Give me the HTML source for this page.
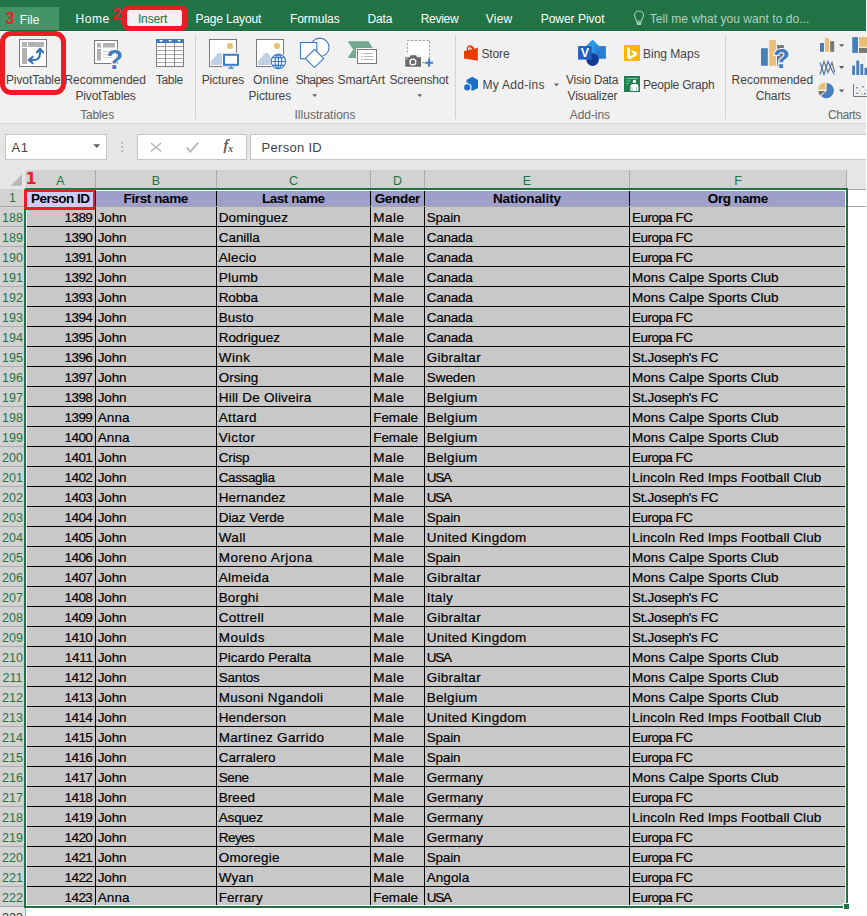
<!DOCTYPE html>
<html lang="en"><head><meta charset="utf-8"><title>Excel - Insert PivotTable</title>
<style>
html,body{margin:0;padding:0}
body{width:867px;height:916px;position:relative;overflow:hidden;background:#e6e6e6;font-family:'Liberation Sans',sans-serif}
div,span,svg{position:absolute;box-sizing:border-box}
.t{white-space:pre;line-height:20px;height:20px;font-size:12px;color:#444}
.c{font-size:13.5px;color:#000;-webkit-text-stroke:0.18px #000}
.b{font-weight:700;-webkit-text-stroke:0}
.r{font-size:12.5px;color:#217346}
#green{left:0;top:0;width:867px;height:31px;background:#217346;border-bottom:1px solid #1e6b40}
#file{left:0;top:7px;width:59px;height:23px;background:#439467}
#ribbon{left:0;top:31px;width:867px;height:93px;background:#f1f1f1;border-bottom:1px solid #d4d4d4;border-top:1px solid #f9f9f9}
.sep{width:1px;background:#d2d2d2;top:35px;height:84px}
.box{background:#fff;border:1px solid #c6c6c6;top:134px;height:26px}
.red{border:4.5px solid #ed1c24}
#colhdr{left:25px;top:170px;width:822px;height:18px;background:#d2d2d2;border-left:1px solid #dcdcdc}
#rowhdr{left:0;top:189px;width:24px;height:717px;background:#d2d2d2}
#cells{left:27px;top:191px;width:818px;height:714px;background:#c8c8c8}
#hrow{left:27px;top:191px;width:818px;height:15px;background:#9f9fcb}
#frz{left:0;top:206px;width:866px;height:1px;background:#a6a6a6}
#white{left:848px;top:190px;width:19px;height:726px;background:#fff}
#white2{left:26px;top:908px;width:842px;height:8px;background:#fff}
.hl{left:27px;width:818px;height:1px;background:#000}
.rl{left:0;width:24px;height:1px;background:#ababab}
.vl{width:1px;background:#000}
.cs{top:170px;width:1px;height:18px;background:#ababab}
.g{background:#217346}

</style></head>
<body>
<div id="green"></div><div id="file"></div>
<div id="ribbon"></div>
<div class="sep" style="left:195px"></div><div class="sep" style="left:455px"></div><div class="sep" style="left:725px"></div>
<div class="red" style="left:122px;top:5.2px;width:65.5px;height:25.6px;border-radius:8px;border-width:5.3px 6.5px 5.5px 5.5px;background:#f1f1f1"></div>
<div class="red" style="left:-0.5px;top:31px;width:66.5px;height:64px;border-radius:11px;border-width:5px"></div>
<div class="box" style="left:5px;width:102px"></div>
<div class="box" style="left:137px;width:110px"></div>
<div class="box" style="left:250px;width:630px"></div>
<div id="colhdr"></div>
<div id="rowhdr"></div>
<div id="white"></div><div id="white2"></div>
<div style="left:848px;top:189px;width:19px;height:1px;background:#a6a6a6"></div>
<div style="left:26px;top:190px;width:820px;height:716px;background:#fff"></div>
<div id="cells"></div>
<div id="hrow"></div>
<div id="frz"></div>
<div style="left:0;top:906px;width:24px;height:1px;background:#ababab"></div>
<div style="left:0;top:907px;width:26px;height:9px;background:#e8e8e8;border-right:1px solid #a6a6a6"></div>
<div style="left:24px;top:189px;width:72px;height:21px;border:3px solid #ed1c24;background:#ccf"></div>
<div class="g" style="left:25px;top:188px;width:823px;height:2px"></div>
<div style="left:24px;top:189px;width:72px;height:21px;border:3px solid #ed1c24;background:#ccf"></div>
<div class="g" style="left:24px;top:210px;width:2px;height:698px"></div>
<div class="g" style="left:24px;top:906px;width:819px;height:2px"></div>
<div class="g" style="left:846px;top:188px;width:2px;height:715px"></div>
<div class="g" style="left:843px;top:903px;width:6px;height:6px;border:1px solid #fff;border-right:0;border-bottom:0"></div>
<div style="left:866px;top:0;width:1px;height:916px;background:#fff"></div>

<div class="hl" style="top:226px"></div>
<div class="rl" style="top:226px"></div>
<div class="hl" style="top:246px"></div>
<div class="rl" style="top:246px"></div>
<div class="hl" style="top:266px"></div>
<div class="rl" style="top:266px"></div>
<div class="hl" style="top:286px"></div>
<div class="rl" style="top:286px"></div>
<div class="hl" style="top:306px"></div>
<div class="rl" style="top:306px"></div>
<div class="hl" style="top:326px"></div>
<div class="rl" style="top:326px"></div>
<div class="hl" style="top:346px"></div>
<div class="rl" style="top:346px"></div>
<div class="hl" style="top:366px"></div>
<div class="rl" style="top:366px"></div>
<div class="hl" style="top:386px"></div>
<div class="rl" style="top:386px"></div>
<div class="hl" style="top:406px"></div>
<div class="rl" style="top:406px"></div>
<div class="hl" style="top:426px"></div>
<div class="rl" style="top:426px"></div>
<div class="hl" style="top:446px"></div>
<div class="rl" style="top:446px"></div>
<div class="hl" style="top:466px"></div>
<div class="rl" style="top:466px"></div>
<div class="hl" style="top:486px"></div>
<div class="rl" style="top:486px"></div>
<div class="hl" style="top:506px"></div>
<div class="rl" style="top:506px"></div>
<div class="hl" style="top:526px"></div>
<div class="rl" style="top:526px"></div>
<div class="hl" style="top:546px"></div>
<div class="rl" style="top:546px"></div>
<div class="hl" style="top:566px"></div>
<div class="rl" style="top:566px"></div>
<div class="hl" style="top:586px"></div>
<div class="rl" style="top:586px"></div>
<div class="hl" style="top:606px"></div>
<div class="rl" style="top:606px"></div>
<div class="hl" style="top:626px"></div>
<div class="rl" style="top:626px"></div>
<div class="hl" style="top:646px"></div>
<div class="rl" style="top:646px"></div>
<div class="hl" style="top:666px"></div>
<div class="rl" style="top:666px"></div>
<div class="hl" style="top:686px"></div>
<div class="rl" style="top:686px"></div>
<div class="hl" style="top:706px"></div>
<div class="rl" style="top:706px"></div>
<div class="hl" style="top:726px"></div>
<div class="rl" style="top:726px"></div>
<div class="hl" style="top:746px"></div>
<div class="rl" style="top:746px"></div>
<div class="hl" style="top:766px"></div>
<div class="rl" style="top:766px"></div>
<div class="hl" style="top:786px"></div>
<div class="rl" style="top:786px"></div>
<div class="hl" style="top:806px"></div>
<div class="rl" style="top:806px"></div>
<div class="hl" style="top:826px"></div>
<div class="rl" style="top:826px"></div>
<div class="hl" style="top:846px"></div>
<div class="rl" style="top:846px"></div>
<div class="hl" style="top:866px"></div>
<div class="rl" style="top:866px"></div>
<div class="hl" style="top:886px"></div>
<div class="rl" style="top:886px"></div>
<div class="vl" style="left:95px;top:191px;height:15px"></div>
<div class="vl" style="left:95px;top:207px;height:698px"></div>
<div class="vl" style="left:216px;top:191px;height:15px"></div>
<div class="vl" style="left:216px;top:207px;height:698px"></div>
<div class="vl" style="left:370px;top:191px;height:15px"></div>
<div class="vl" style="left:370px;top:207px;height:698px"></div>
<div class="vl" style="left:424px;top:191px;height:15px"></div>
<div class="vl" style="left:424px;top:207px;height:698px"></div>
<div class="vl" style="left:629px;top:191px;height:15px"></div>
<div class="vl" style="left:629px;top:207px;height:698px"></div>
<div class="cs" style="left:95px"></div>
<div class="cs" style="left:216px"></div>
<div class="cs" style="left:370px"></div>
<div class="cs" style="left:424px"></div>
<div class="cs" style="left:629px"></div>
<div class="cs" style="left:846px"></div>
<svg width="867" height="190" viewBox="0 0 867 190" style="left:0;top:0" font-family="'Liberation Sans',sans-serif">
<!-- lightbulb -->
<g fill="none" stroke="#a8cdb9" stroke-width="1.1">
<path d="M636.6 21.3 C636.6 19.3 634.5 18 634.5 15.5 A4.5 4.5 0 0 1 643.5 15.5 C643.5 18 641.4 19.3 641.4 21.3 Z"/>
<path d="M636.3 22.9 H641.7 M637 24.3 H641" stroke-width="1.4"/>
</g>
<!-- PivotTable -->
<rect x="19.5" y="39.5" width="27" height="27" fill="#fff" stroke="#797979"/>
<rect x="22" y="42" width="5" height="5" fill="#b2b2b2"/><rect x="28" y="42" width="16" height="5" fill="#b2b2b2"/><rect x="22" y="48" width="5" height="16" fill="#b2b2b2"/>
<g fill="none" stroke="#3472b5" stroke-width="2"><path d="M29 60 H33.5 C38 60 40 57.5 40 53 V49.5"/><path d="M33.3 56.2 L28.8 60 L33.3 63.8"/><path d="M36.3 53 L40 48.8 L43.7 53"/></g>
<!-- Recommended PivotTables -->
<rect x="94.5" y="40.5" width="23" height="23" fill="#fff" stroke="#797979"/>
<rect x="97" y="43" width="4" height="4.5" fill="#b2b2b2"/><rect x="103" y="43" width="12" height="4.5" fill="#b2b2b2"/><rect x="97" y="49" width="4" height="11.5" fill="#b2b2b2"/>
<path d="M103 51.5 H112 M103 54.5 H112 M103 57.5 H112" stroke="#d4d4d4" stroke-width="1.2"/>
<text x="106.6" y="68.6" font-size="27" font-weight="700" fill="#3e7bc4" stroke="#f4f4f4" stroke-width="2.2" paint-order="stroke">?</text>
<!-- Table -->
<rect x="156.5" y="39.5" width="27" height="27" fill="#fff" stroke="#808080"/>
<rect x="156" y="39" width="28" height="4" fill="#3e7bc4"/>
<path d="M159.2 40 h3.8 l-1.9 2.3z M168.2 40 h3.8 l-1.9 2.3z M177.2 40 h3.8 l-1.9 2.3z" fill="#fff"/>
<path d="M157 46.5 H183 M157 50.5 H183 M157 54.5 H183 M157 58.5 H183 M157 62.5 H183" stroke="#a6a6a6" stroke-width="1"/>
<path d="M165.5 43 V66 M174.5 43 V66" stroke="#909090" stroke-width="1"/>
<!-- Pictures -->
<rect x="209.5" y="39.5" width="27" height="27" fill="#fff" stroke="#797979"/>
<circle cx="230" cy="46" r="3" fill="#eabf6e"/>
<path d="M211 65 V61.3 L218.3 53 H220.6 L224 57 V65Z" fill="#bdd0e6"/>
<rect x="222" y="52.8" width="18" height="14" fill="#f6f6f6"/>
<rect x="224" y="54.8" width="14" height="10" fill="#fff" stroke="#3e7bc4" stroke-width="2"/>
<path d="M231 66 V68 M228.3 68.2 H233.7" stroke="#3e7bc4" stroke-width="1.3"/>
<!-- Online Pictures -->
<rect x="256.5" y="39.5" width="27" height="27" fill="#fff" stroke="#797979"/>
<circle cx="277" cy="46" r="3" fill="#eabf6e"/>
<path d="M258 65 V61.3 L265.3 53 H267.6 L271 57 V65Z" fill="#bdd0e6"/>
<circle cx="278.4" cy="61.5" r="8.6" fill="#f6f6f6"/>
<g fill="none" stroke="#3e7bc4" stroke-width="1.2"><circle cx="278.4" cy="61.5" r="7.2" fill="#fff"/><ellipse cx="278.4" cy="61.5" rx="3.3" ry="7.2"/><path d="M278.4 54.3 V68.7 M271.2 61.5 H285.6 M272.4 57.7 H284.4 M272.4 65.3 H284.4"/></g>
<!-- Shapes -->
<g fill="#fff" stroke="#3e7bc4" stroke-width="1.1"><circle cx="319.8" cy="47.3" r="9.2"/><rect x="300.5" y="42.5" width="16.3" height="16.2"/><path d="M314.5 49.3 L323.7 58.5 L314.5 67.6 L305.3 58.5Z"/></g>
<!-- SmartArt -->
<path d="M347.7 41.2 H368.4 L373.6 49.5 L368.4 57.9 H347.7 L353.2 49.5Z" fill="#74a892"/>
<rect x="356" y="48" width="21.7" height="16.8" fill="#f6f6f6"/>
<rect x="357.5" y="49.5" width="19" height="14" fill="#fff" stroke="#797979"/>
<path d="M361 53.5 h1.6 M364 53.5 H373 M361 56.5 h1.6 M364 56.5 H373 M361 59.5 h1.6 M364 59.5 H373" stroke="#b4b4b4" stroke-width="1"/>
<!-- Screenshot -->
<rect x="407.5" y="40.5" width="22" height="22" fill="#fff" stroke="#a0a0a0" stroke-dasharray="2.2 1.6"/>
<rect x="404.2" y="54.2" width="17.8" height="13.6" fill="#f6f6f6"/>
<path d="M405.2 57.2 H409.6 L410.6 55.2 H416 L417 57.2 H421 V66.8 H405.2Z" fill="#6a6a6a"/>
<circle cx="412.9" cy="62" r="2.9" fill="#6a6a6a" stroke="#fff" stroke-width="1.4"/>
<rect x="406.3" y="58.2" width="1.4" height="1.2" fill="#ddd"/>
<path d="M423 62.8 H425" stroke="#a0a0a0"/>
<path d="M425.2 62.8 H433 M429.1 58.8 V66.8" stroke="#3e7bc4" stroke-width="2"/>
<!-- dropdown arrows -->
<path d="M312.2 94.2 h5 l-2.5 2.8z M417.2 94.2 h5 l-2.5 2.8z M554 83.4 h5 l-2.5 2.8z" fill="#606060"/>
<!-- Store -->
<path d="M467.4 51 V48.6 A2.6 2.7 0 0 1 472.6 48.4 V49.6 M470 48.6 A1.6 1.6 0 0 1 473.4 48.4 V49.2" fill="none" stroke="#eb3c00" stroke-width="1.3"/>
<path d="M464 51.3 L477.8 47.8 V60.8 L464 58.5Z" fill="#eb3c00"/>
<!-- My Add-ins -->
<path d="M472.3 76.8 L478 79.9 V88.2 L472.3 90.8 L466.5 88.2 V79.9Z" fill="#1b6ec8"/>
<path d="M467.2 83.3 L470.8 85.3 V89.4 L467.2 91.4 L463.6 89.4 V85.3Z" fill="#1b6ec8" stroke="#f1f1f1" stroke-width="1.2"/>
<!-- Visio -->
<path d="M592.6 39.6 L600.6 47.6 L592.6 55.6 L584.6 47.6Z" fill="#2f96e6"/>
<rect x="594.6" y="46.1" width="11.3" height="12.7" fill="#2b7cd3"/>
<path d="M594.6 46.1 L599.1 46.1 L600.6 47.6 L594.6 53.6Z" fill="#2a86dc"/>
<circle cx="592.6" cy="59.6" r="6.3" fill="#123c94"/>
<rect x="578.1" y="46.1" width="13.6" height="13.5" fill="#1f5fc4"/>
<text x="580.7" y="57.1" font-size="12.5" font-weight="700" fill="#fff">V</text>
<!-- Bing -->
<rect x="624" y="45" width="16" height="16" fill="#ffb400"/>
<path d="M627.2 46.8 L629.8 47.7 V56.2 L634 53.9 L632.3 53.1 L631.2 50.3 L636.8 52.3 V55.2 L629.8 59.4 L627.2 57.9Z" fill="#fff"/>
<!-- People Graph -->
<rect x="624" y="76" width="16" height="16" fill="#1e7e4e"/>
<path d="M626 78.5 H638 M626 81 H630.5 M626 83.5 H629" stroke="#7cc29c" stroke-width="1.2"/>
<circle cx="634.4" cy="81.4" r="1.7" fill="#fff"/>
<path d="M630.4 91 V86.5 C630.4 84.7 631.4 84 632.6 84 H636.2 C637.4 84 638.4 84.7 638.4 86.5 V91 H637 V87 H636.6 V91 H632.2 V87 H631.8 V91Z" fill="#fff"/>
<!-- Recommended Charts -->
<rect x="761" y="48.2" width="6.8" height="17.5" fill="#4a7ebb"/><rect x="769.2" y="40.1" width="6.8" height="25.6" fill="#eabf74"/><rect x="777" y="45.1" width="6.8" height="20.6" fill="#767676"/>
<text x="773.2" y="68.4" font-size="27" font-weight="700" fill="#3e7bc4" stroke="#f4f4f4" stroke-width="2.2" paint-order="stroke">?</text>
<!-- small charts -->
<rect x="820" y="43" width="4" height="8.8" fill="#4a7ebb"/><rect x="825" y="38" width="4" height="13.8" fill="#eabf74"/><rect x="830.2" y="41.2" width="4" height="10.6" fill="#767676"/>
<path d="M839 44.2 h5.2 l-2.6 2.9z M839 66 h5.2 l-2.6 2.9z M839 89.6 h5.2 l-2.6 2.9z" fill="#606060"/>
<rect x="852.2" y="37.1" width="5.8" height="15.8" fill="#4a7ebb"/><rect x="859" y="37.1" width="8" height="9.7" fill="#eabf74"/><rect x="859" y="47.9" width="8" height="5" fill="#767676"/>
<g fill="none" stroke-width="1.2"><path d="M820 74.5 L824 61.5 L828 72.5 L832 62.5 L834.6 72" stroke="#777"/><path d="M820 62.5 L824 74.5 L828 61.5 L832 70.5 L834.6 74.5" stroke="#3e7bc4"/></g>
<rect x="852.2" y="65.7" width="2.8" height="9.3" fill="#4a7ebb"/><rect x="856.3" y="60.6" width="2.9" height="14.4" fill="#4a7ebb"/><rect x="860.4" y="64.1" width="2.8" height="10.9" fill="#4a7ebb"/><rect x="864.5" y="67.8" width="2.5" height="7.2" fill="#4a7ebb"/>
<path d="M826.6 90.8 V83 A7.6 7.6 0 1 1 821 96.1Z" fill="#4a7ebb"/>
<path d="M825.4 89.6 H818.2 A7.2 7.2 0 0 1 825.4 82.4Z" fill="#eabf74"/>
<path d="M825.2 91 L820 95.4 A7.2 7.2 0 0 1 818.3 91Z" fill="#767676"/>
<path d="M853.5 84 V96.5 H867" fill="none" stroke="#777" stroke-width="1"/>
<path d="M856 87 h1.6 v1.6 h-1.6z M862 86 h1.6 v1.6 h-1.6z M856.5 92.5 h1.6 v1.6 h-1.6z M864 93 h1.6 v1.6 h-1.6z" fill="#4a7ebb"/>
<path d="M859 89.5 h1.6 v1.6 h-1.6z M865 89.5 h1.6 v1.6 h-1.6z M861 93.5 h1.6 v1.6 h-1.6z" fill="#eabf74"/>
<!-- formula bar -->
<path d="M93.2 144.3 h7 l-3.5 3.8z" fill="#606060"/>
<path d="M122.2 142.2 v1.6 M122.2 146.3 v1.6 M122.2 150.4 v1.6" stroke="#a0a0a0" stroke-width="1.5"/>
<path d="M151 143 L161.1 151.5 M161.1 143 L151 151.5" stroke="#b4b4b4" stroke-width="1.5" fill="none"/>
<path d="M186.7 147.7 L190.4 151.4 L198.2 142.8" stroke="#bcbcbc" stroke-width="2.1" fill="none"/>
<text x="223.4" y="149.6" font-family="'Liberation Serif',serif" font-style="italic" font-size="15.5" fill="#4a4a4a" stroke="#4a4a4a" stroke-width="0.35">f</text>
<text x="228.3" y="152.2" font-family="'Liberation Serif',serif" font-style="italic" font-weight="700" font-size="9.5" fill="#555">x</text>
<!-- corner triangle -->
<path d="M22 174.3 V185.7 H10.6Z" fill="#b8b8b8"/>
</svg>

<span class="t" style="left:5.60px;top:8.86px;font-size:16px;color:#ed1c24;font-weight:700;">3</span>
<span class="t" style="left:19.70px;top:9.84px;color:#fff;letter-spacing:0.114px;">File</span>
<span class="t" style="left:75.50px;top:8.84px;color:#fff;letter-spacing:0.571px;">Home</span>
<span class="t" style="left:112.20px;top:3.88px;font-size:16.5px;color:#ed1c24;font-weight:700;">2</span>
<span class="t" style="left:137.90px;top:8.84px;color:#217346;letter-spacing:-0.119px;">Insert</span>
<span class="t" style="left:195.50px;top:8.84px;color:#fff;letter-spacing:-0.163px;">Page Layout</span>
<span class="t" style="left:289.90px;top:8.84px;color:#fff;letter-spacing:-0.027px;">Formulas</span>
<span class="t" style="left:367.50px;top:8.84px;color:#fff;letter-spacing:-0.14px;">Data</span>
<span class="t" style="left:420.70px;top:8.84px;color:#fff;letter-spacing:-0.277px;">Review</span>
<span class="t" style="left:485.70px;top:8.84px;color:#fff;letter-spacing:0.251px;">View</span>
<span class="t" style="left:540.70px;top:8.84px;color:#fff;letter-spacing:-0.021px;">Power Pivot</span>
<span class="t" style="left:649.70px;top:8.84px;color:#b2d0c0;letter-spacing:0.057px;">Tell me what you want to do...</span>
<span class="t" style="left:5.90px;top:69.54px;letter-spacing:-0.078px;">PivotTable</span>
<span class="t" style="left:64.40px;top:69.54px;letter-spacing:0.02px;">Recommended</span>
<span class="t" style="left:75.40px;top:86.14px;letter-spacing:-0.098px;">PivotTables</span>
<span class="t" style="left:155.70px;top:69.54px;letter-spacing:-0.277px;">Table</span>
<span class="t" style="left:80.20px;top:105.14px;color:#666;letter-spacing:-0.148px;">Tables</span>
<span class="t" style="left:201.70px;top:69.54px;letter-spacing:-0.12px;">Pictures</span>
<span class="t" style="left:253.10px;top:69.54px;letter-spacing:0.185px;">Online</span>
<span class="t" style="left:248.40px;top:86.14px;letter-spacing:-0.082px;">Pictures</span>
<span class="t" style="left:295.70px;top:69.54px;letter-spacing:-0.534px;">Shapes</span>
<span class="t" style="left:337.50px;top:69.54px;letter-spacing:0.045px;">SmartArt</span>
<span class="t" style="left:389.50px;top:69.54px;letter-spacing:-0.17px;">Screenshot</span>
<span class="t" style="left:294.50px;top:105.14px;color:#666;letter-spacing:0.031px;">Illustrations</span>
<span class="t" style="left:481.50px;top:43.94px;letter-spacing:-0.138px;">Store</span>
<span class="t" style="left:482.40px;top:75.24px;letter-spacing:0.294px;">My Add-ins</span>
<span class="t" style="left:566.00px;top:69.54px;letter-spacing:-0.238px;">Visio Data</span>
<span class="t" style="left:567.60px;top:86.14px;letter-spacing:-0.221px;">Visualizer</span>
<span class="t" style="left:643.00px;top:43.94px;">Bing Maps</span>
<span class="t" style="left:643.00px;top:75.24px;letter-spacing:-0.222px;">People Graph</span>
<span class="t" style="left:569.80px;top:105.14px;color:#666;letter-spacing:-0.07px;">Add-ins</span>
<span class="t" style="left:731.60px;top:69.54px;letter-spacing:0.02px;">Recommended</span>
<span class="t" style="left:755.70px;top:86.14px;letter-spacing:-0.091px;">Charts</span>
<span class="t" style="left:827.90px;top:105.14px;color:#666;letter-spacing:-0.407px;">Charts</span>
<span class="t" style="left:11.50px;top:138.10px;font-size:13px;letter-spacing:0.697px;">A1</span>
<span class="t" style="left:261.50px;top:138.10px;font-size:13px;letter-spacing:0.299px;">Person ID</span>
<span class="t r" style="left:56.33px;top:171.07px;">A</span>
<span class="t r" style="left:151.83px;top:171.07px;">B</span>
<span class="t r" style="left:288.98px;top:171.07px;">C</span>
<span class="t r" style="left:392.98px;top:171.07px;">D</span>
<span class="t r" style="left:522.83px;top:171.07px;">E</span>
<span class="t r" style="left:734.18px;top:171.07px;">F</span>
<span class="t" style="left:25.40px;top:169.46px;font-size:16px;color:#ed1c24;font-weight:700;font-family:'DejaVu Sans',sans-serif;">1</span>
<span class="t r" style="left:9.02px;top:188.17px;">1</span>
<span class="t c b" style="left:31.00px;top:188.82px;letter-spacing:-0.503px;">Person ID</span>
<span class="t c b" style="left:123.62px;top:188.82px;letter-spacing:-0.392px;">First name</span>
<span class="t c b" style="left:262.05px;top:188.82px;letter-spacing:-0.484px;">Last name</span>
<span class="t c b" style="left:374.64px;top:188.82px;letter-spacing:-0.311px;">Gender</span>
<span class="t c b" style="left:492.91px;top:188.82px;letter-spacing:-0.084px;">Nationality</span>
<span class="t c b" style="left:707.77px;top:188.82px;letter-spacing:-0.366px;">Org name</span>
<span class="t r" style="left:2.07px;top:208.27px;">188</span>
<span class="t c" style="left:64.46px;top:207.92px;letter-spacing:-0.537px;">1389</span>
<span class="t c" style="left:97.70px;top:207.92px;letter-spacing:-0.118px;">John</span>
<span class="t c" style="left:218.70px;top:207.92px;letter-spacing:0.13px;">Dominguez</span>
<span class="t c" style="left:373.20px;top:207.92px;letter-spacing:0.507px;">Male</span>
<span class="t c" style="left:426.70px;top:207.92px;letter-spacing:-0.17px;">Spain</span>
<span class="t c" style="left:632.10px;top:207.92px;letter-spacing:-0.553px;">Europa FC</span>
<span class="t r" style="left:2.07px;top:228.27px;">189</span>
<span class="t c" style="left:64.46px;top:227.92px;letter-spacing:-0.537px;">1390</span>
<span class="t c" style="left:97.70px;top:227.92px;letter-spacing:-0.118px;">John</span>
<span class="t c" style="left:218.70px;top:227.92px;letter-spacing:-0.031px;">Canilla</span>
<span class="t c" style="left:373.20px;top:227.92px;letter-spacing:0.507px;">Male</span>
<span class="t c" style="left:426.70px;top:227.92px;letter-spacing:-0.237px;">Canada</span>
<span class="t c" style="left:632.10px;top:227.92px;letter-spacing:-0.553px;">Europa FC</span>
<span class="t r" style="left:2.07px;top:248.27px;">190</span>
<span class="t c" style="left:64.46px;top:247.92px;letter-spacing:-0.537px;">1391</span>
<span class="t c" style="left:97.70px;top:247.92px;letter-spacing:-0.118px;">John</span>
<span class="t c" style="left:218.70px;top:247.92px;letter-spacing:0.158px;">Alecio</span>
<span class="t c" style="left:373.20px;top:247.92px;letter-spacing:0.507px;">Male</span>
<span class="t c" style="left:426.70px;top:247.92px;letter-spacing:-0.237px;">Canada</span>
<span class="t c" style="left:632.10px;top:247.92px;letter-spacing:-0.553px;">Europa FC</span>
<span class="t r" style="left:2.07px;top:268.27px;">191</span>
<span class="t c" style="left:64.46px;top:267.92px;letter-spacing:-0.537px;">1392</span>
<span class="t c" style="left:97.70px;top:267.92px;letter-spacing:-0.118px;">John</span>
<span class="t c" style="left:218.70px;top:267.92px;letter-spacing:0.228px;">Plumb</span>
<span class="t c" style="left:373.20px;top:267.92px;letter-spacing:0.507px;">Male</span>
<span class="t c" style="left:426.70px;top:267.92px;letter-spacing:-0.237px;">Canada</span>
<span class="t c" style="left:632.10px;top:267.92px;letter-spacing:0.002px;">Mons Calpe Sports Club</span>
<span class="t r" style="left:2.07px;top:288.27px;">192</span>
<span class="t c" style="left:64.46px;top:287.92px;letter-spacing:-0.537px;">1393</span>
<span class="t c" style="left:97.70px;top:287.92px;letter-spacing:-0.118px;">John</span>
<span class="t c" style="left:218.70px;top:287.92px;letter-spacing:-0.126px;">Robba</span>
<span class="t c" style="left:373.20px;top:287.92px;letter-spacing:0.507px;">Male</span>
<span class="t c" style="left:426.70px;top:287.92px;letter-spacing:-0.237px;">Canada</span>
<span class="t c" style="left:632.10px;top:287.92px;letter-spacing:0.002px;">Mons Calpe Sports Club</span>
<span class="t r" style="left:2.07px;top:308.27px;">193</span>
<span class="t c" style="left:64.46px;top:307.92px;letter-spacing:-0.537px;">1394</span>
<span class="t c" style="left:97.70px;top:307.92px;letter-spacing:-0.118px;">John</span>
<span class="t c" style="left:218.70px;top:307.92px;letter-spacing:0.083px;">Busto</span>
<span class="t c" style="left:373.20px;top:307.92px;letter-spacing:0.507px;">Male</span>
<span class="t c" style="left:426.70px;top:307.92px;letter-spacing:-0.237px;">Canada</span>
<span class="t c" style="left:632.10px;top:307.92px;letter-spacing:-0.553px;">Europa FC</span>
<span class="t r" style="left:2.07px;top:328.27px;">194</span>
<span class="t c" style="left:64.46px;top:327.92px;letter-spacing:-0.537px;">1395</span>
<span class="t c" style="left:97.70px;top:327.92px;letter-spacing:-0.118px;">John</span>
<span class="t c" style="left:218.70px;top:327.92px;letter-spacing:-0.037px;">Rodriguez</span>
<span class="t c" style="left:373.20px;top:327.92px;letter-spacing:0.507px;">Male</span>
<span class="t c" style="left:426.70px;top:327.92px;letter-spacing:-0.237px;">Canada</span>
<span class="t c" style="left:632.10px;top:327.92px;letter-spacing:-0.553px;">Europa FC</span>
<span class="t r" style="left:2.07px;top:348.27px;">195</span>
<span class="t c" style="left:64.46px;top:347.92px;letter-spacing:-0.537px;">1396</span>
<span class="t c" style="left:97.70px;top:347.92px;letter-spacing:-0.118px;">John</span>
<span class="t c" style="left:218.70px;top:347.92px;letter-spacing:0.47px;">Wink</span>
<span class="t c" style="left:373.20px;top:347.92px;letter-spacing:0.507px;">Male</span>
<span class="t c" style="left:426.70px;top:347.92px;letter-spacing:0.275px;">Gibraltar</span>
<span class="t c" style="left:632.10px;top:347.92px;letter-spacing:-0.367px;">St.Joseph&#x27;s FC</span>
<span class="t r" style="left:2.07px;top:368.27px;">196</span>
<span class="t c" style="left:64.46px;top:367.92px;letter-spacing:-0.537px;">1397</span>
<span class="t c" style="left:97.70px;top:367.92px;letter-spacing:-0.118px;">John</span>
<span class="t c" style="left:218.70px;top:367.92px;letter-spacing:-0.023px;">Orsing</span>
<span class="t c" style="left:373.20px;top:367.92px;letter-spacing:0.507px;">Male</span>
<span class="t c" style="left:426.70px;top:367.92px;letter-spacing:-0.029px;">Sweden</span>
<span class="t c" style="left:632.10px;top:367.92px;letter-spacing:0.002px;">Mons Calpe Sports Club</span>
<span class="t r" style="left:2.07px;top:388.27px;">197</span>
<span class="t c" style="left:64.46px;top:387.92px;letter-spacing:-0.537px;">1398</span>
<span class="t c" style="left:97.70px;top:387.92px;letter-spacing:-0.118px;">John</span>
<span class="t c" style="left:218.70px;top:387.92px;letter-spacing:0.22px;">Hill De Oliveira</span>
<span class="t c" style="left:373.20px;top:387.92px;letter-spacing:0.507px;">Male</span>
<span class="t c" style="left:426.70px;top:387.92px;letter-spacing:0.303px;">Belgium</span>
<span class="t c" style="left:632.10px;top:387.92px;letter-spacing:-0.367px;">St.Joseph&#x27;s FC</span>
<span class="t r" style="left:2.07px;top:408.27px;">198</span>
<span class="t c" style="left:64.46px;top:407.92px;letter-spacing:-0.537px;">1399</span>
<span class="t c" style="left:97.70px;top:407.92px;letter-spacing:0.122px;">Anna</span>
<span class="t c" style="left:218.70px;top:407.92px;letter-spacing:0.359px;">Attard</span>
<span class="t c" style="left:373.20px;top:407.92px;letter-spacing:-0.044px;">Female</span>
<span class="t c" style="left:426.70px;top:407.92px;letter-spacing:0.303px;">Belgium</span>
<span class="t c" style="left:632.10px;top:407.92px;letter-spacing:0.002px;">Mons Calpe Sports Club</span>
<span class="t r" style="left:2.07px;top:428.27px;">199</span>
<span class="t c" style="left:64.46px;top:427.92px;letter-spacing:-0.537px;">1400</span>
<span class="t c" style="left:97.70px;top:427.92px;letter-spacing:0.122px;">Anna</span>
<span class="t c" style="left:218.70px;top:427.92px;letter-spacing:0.416px;">Victor</span>
<span class="t c" style="left:373.20px;top:427.92px;letter-spacing:-0.044px;">Female</span>
<span class="t c" style="left:426.70px;top:427.92px;letter-spacing:0.303px;">Belgium</span>
<span class="t c" style="left:632.10px;top:427.92px;letter-spacing:0.002px;">Mons Calpe Sports Club</span>
<span class="t r" style="left:2.07px;top:448.27px;">200</span>
<span class="t c" style="left:64.46px;top:447.92px;letter-spacing:-0.537px;">1401</span>
<span class="t c" style="left:97.70px;top:447.92px;letter-spacing:-0.118px;">John</span>
<span class="t c" style="left:218.70px;top:447.92px;letter-spacing:-0.146px;">Crisp</span>
<span class="t c" style="left:373.20px;top:447.92px;letter-spacing:0.507px;">Male</span>
<span class="t c" style="left:426.70px;top:447.92px;letter-spacing:0.303px;">Belgium</span>
<span class="t c" style="left:632.10px;top:447.92px;letter-spacing:-0.553px;">Europa FC</span>
<span class="t r" style="left:2.07px;top:468.27px;">201</span>
<span class="t c" style="left:64.46px;top:467.92px;letter-spacing:-0.537px;">1402</span>
<span class="t c" style="left:97.70px;top:467.92px;letter-spacing:-0.118px;">John</span>
<span class="t c" style="left:218.70px;top:467.92px;letter-spacing:-0.376px;">Cassaglia</span>
<span class="t c" style="left:373.20px;top:467.92px;letter-spacing:0.507px;">Male</span>
<span class="t c" style="left:426.70px;top:467.92px;letter-spacing:-1.255px;">USA</span>
<span class="t c" style="left:632.10px;top:467.92px;letter-spacing:0.053px;">Lincoln Red Imps Football Club</span>
<span class="t r" style="left:2.07px;top:488.27px;">202</span>
<span class="t c" style="left:64.46px;top:487.92px;letter-spacing:-0.537px;">1403</span>
<span class="t c" style="left:97.70px;top:487.92px;letter-spacing:-0.118px;">John</span>
<span class="t c" style="left:218.70px;top:487.92px;letter-spacing:0.095px;">Hernandez</span>
<span class="t c" style="left:373.20px;top:487.92px;letter-spacing:0.507px;">Male</span>
<span class="t c" style="left:426.70px;top:487.92px;letter-spacing:-1.255px;">USA</span>
<span class="t c" style="left:632.10px;top:487.92px;letter-spacing:-0.367px;">St.Joseph&#x27;s FC</span>
<span class="t r" style="left:2.07px;top:508.27px;">203</span>
<span class="t c" style="left:64.46px;top:507.92px;letter-spacing:-0.537px;">1404</span>
<span class="t c" style="left:97.70px;top:507.92px;letter-spacing:-0.118px;">John</span>
<span class="t c" style="left:218.70px;top:507.92px;letter-spacing:-0.049px;">Diaz Verde</span>
<span class="t c" style="left:373.20px;top:507.92px;letter-spacing:0.507px;">Male</span>
<span class="t c" style="left:426.70px;top:507.92px;letter-spacing:-0.17px;">Spain</span>
<span class="t c" style="left:632.10px;top:507.92px;letter-spacing:-0.553px;">Europa FC</span>
<span class="t r" style="left:2.07px;top:528.27px;">204</span>
<span class="t c" style="left:64.46px;top:527.92px;letter-spacing:-0.537px;">1405</span>
<span class="t c" style="left:97.70px;top:527.92px;letter-spacing:-0.118px;">John</span>
<span class="t c" style="left:218.70px;top:527.92px;letter-spacing:0.37px;">Wall</span>
<span class="t c" style="left:373.20px;top:527.92px;letter-spacing:0.507px;">Male</span>
<span class="t c" style="left:426.70px;top:527.92px;letter-spacing:0.267px;">United Kingdom</span>
<span class="t c" style="left:632.10px;top:527.92px;letter-spacing:0.053px;">Lincoln Red Imps Football Club</span>
<span class="t r" style="left:2.07px;top:548.27px;">205</span>
<span class="t c" style="left:64.46px;top:547.92px;letter-spacing:-0.537px;">1406</span>
<span class="t c" style="left:97.70px;top:547.92px;letter-spacing:-0.118px;">John</span>
<span class="t c" style="left:218.70px;top:547.92px;letter-spacing:0.476px;">Moreno Arjona</span>
<span class="t c" style="left:373.20px;top:547.92px;letter-spacing:0.507px;">Male</span>
<span class="t c" style="left:426.70px;top:547.92px;letter-spacing:-0.17px;">Spain</span>
<span class="t c" style="left:632.10px;top:547.92px;letter-spacing:0.002px;">Mons Calpe Sports Club</span>
<span class="t r" style="left:2.07px;top:568.27px;">206</span>
<span class="t c" style="left:64.46px;top:567.92px;letter-spacing:-0.537px;">1407</span>
<span class="t c" style="left:97.70px;top:567.92px;letter-spacing:-0.118px;">John</span>
<span class="t c" style="left:218.70px;top:567.92px;letter-spacing:0.271px;">Almeida</span>
<span class="t c" style="left:373.20px;top:567.92px;letter-spacing:0.507px;">Male</span>
<span class="t c" style="left:426.70px;top:567.92px;letter-spacing:0.275px;">Gibraltar</span>
<span class="t c" style="left:632.10px;top:567.92px;letter-spacing:0.002px;">Mons Calpe Sports Club</span>
<span class="t r" style="left:2.07px;top:588.27px;">207</span>
<span class="t c" style="left:64.46px;top:587.92px;letter-spacing:-0.537px;">1408</span>
<span class="t c" style="left:97.70px;top:587.92px;letter-spacing:-0.118px;">John</span>
<span class="t c" style="left:218.70px;top:587.92px;letter-spacing:0.154px;">Borghi</span>
<span class="t c" style="left:373.20px;top:587.92px;letter-spacing:0.507px;">Male</span>
<span class="t c" style="left:426.70px;top:587.92px;letter-spacing:0.319px;">Italy</span>
<span class="t c" style="left:632.10px;top:587.92px;letter-spacing:-0.367px;">St.Joseph&#x27;s FC</span>
<span class="t r" style="left:2.07px;top:608.27px;">208</span>
<span class="t c" style="left:64.46px;top:607.92px;letter-spacing:-0.537px;">1409</span>
<span class="t c" style="left:97.70px;top:607.92px;letter-spacing:-0.118px;">John</span>
<span class="t c" style="left:218.70px;top:607.92px;letter-spacing:0.323px;">Cottrell</span>
<span class="t c" style="left:373.20px;top:607.92px;letter-spacing:0.507px;">Male</span>
<span class="t c" style="left:426.70px;top:607.92px;letter-spacing:0.275px;">Gibraltar</span>
<span class="t c" style="left:632.10px;top:607.92px;letter-spacing:-0.367px;">St.Joseph&#x27;s FC</span>
<span class="t r" style="left:2.07px;top:628.27px;">209</span>
<span class="t c" style="left:64.46px;top:627.92px;letter-spacing:-0.537px;">1410</span>
<span class="t c" style="left:97.70px;top:627.92px;letter-spacing:-0.118px;">John</span>
<span class="t c" style="left:218.70px;top:627.92px;letter-spacing:0.472px;">Moulds</span>
<span class="t c" style="left:373.20px;top:627.92px;letter-spacing:0.507px;">Male</span>
<span class="t c" style="left:426.70px;top:627.92px;letter-spacing:0.267px;">United Kingdom</span>
<span class="t c" style="left:632.10px;top:627.92px;letter-spacing:-0.367px;">St.Joseph&#x27;s FC</span>
<span class="t r" style="left:2.07px;top:648.27px;">210</span>
<span class="t c" style="left:64.72px;top:647.92px;letter-spacing:-0.283px;">1411</span>
<span class="t c" style="left:97.70px;top:647.92px;letter-spacing:-0.118px;">John</span>
<span class="t c" style="left:218.70px;top:647.92px;letter-spacing:0.005px;">Picardo Peralta</span>
<span class="t c" style="left:373.20px;top:647.92px;letter-spacing:0.507px;">Male</span>
<span class="t c" style="left:426.70px;top:647.92px;letter-spacing:-1.255px;">USA</span>
<span class="t c" style="left:632.10px;top:647.92px;letter-spacing:0.002px;">Mons Calpe Sports Club</span>
<span class="t r" style="left:2.53px;top:668.27px;">211</span>
<span class="t c" style="left:64.46px;top:667.92px;letter-spacing:-0.537px;">1412</span>
<span class="t c" style="left:97.70px;top:667.92px;letter-spacing:-0.118px;">John</span>
<span class="t c" style="left:218.70px;top:667.92px;letter-spacing:-0.177px;">Santos</span>
<span class="t c" style="left:373.20px;top:667.92px;letter-spacing:0.507px;">Male</span>
<span class="t c" style="left:426.70px;top:667.92px;letter-spacing:0.275px;">Gibraltar</span>
<span class="t c" style="left:632.10px;top:667.92px;letter-spacing:0.002px;">Mons Calpe Sports Club</span>
<span class="t r" style="left:2.07px;top:688.27px;">212</span>
<span class="t c" style="left:64.46px;top:687.92px;letter-spacing:-0.537px;">1413</span>
<span class="t c" style="left:97.70px;top:687.92px;letter-spacing:-0.118px;">John</span>
<span class="t c" style="left:218.70px;top:687.92px;letter-spacing:0.272px;">Musoni Ngandoli</span>
<span class="t c" style="left:373.20px;top:687.92px;letter-spacing:0.507px;">Male</span>
<span class="t c" style="left:426.70px;top:687.92px;letter-spacing:0.303px;">Belgium</span>
<span class="t c" style="left:632.10px;top:687.92px;letter-spacing:0.002px;">Mons Calpe Sports Club</span>
<span class="t r" style="left:2.07px;top:708.27px;">213</span>
<span class="t c" style="left:64.46px;top:707.92px;letter-spacing:-0.537px;">1414</span>
<span class="t c" style="left:97.70px;top:707.92px;letter-spacing:-0.118px;">John</span>
<span class="t c" style="left:218.70px;top:707.92px;letter-spacing:0.158px;">Henderson</span>
<span class="t c" style="left:373.20px;top:707.92px;letter-spacing:0.507px;">Male</span>
<span class="t c" style="left:426.70px;top:707.92px;letter-spacing:0.267px;">United Kingdom</span>
<span class="t c" style="left:632.10px;top:707.92px;letter-spacing:0.053px;">Lincoln Red Imps Football Club</span>
<span class="t r" style="left:2.07px;top:728.27px;">214</span>
<span class="t c" style="left:64.46px;top:727.92px;letter-spacing:-0.537px;">1415</span>
<span class="t c" style="left:97.70px;top:727.92px;letter-spacing:-0.118px;">John</span>
<span class="t c" style="left:218.70px;top:727.92px;letter-spacing:0.322px;">Martinez Garrido</span>
<span class="t c" style="left:373.20px;top:727.92px;letter-spacing:0.507px;">Male</span>
<span class="t c" style="left:426.70px;top:727.92px;letter-spacing:-0.17px;">Spain</span>
<span class="t c" style="left:632.10px;top:727.92px;letter-spacing:-0.553px;">Europa FC</span>
<span class="t r" style="left:2.07px;top:748.27px;">215</span>
<span class="t c" style="left:64.46px;top:747.92px;letter-spacing:-0.537px;">1416</span>
<span class="t c" style="left:97.70px;top:747.92px;letter-spacing:-0.118px;">John</span>
<span class="t c" style="left:218.70px;top:747.92px;letter-spacing:0.08px;">Carralero</span>
<span class="t c" style="left:373.20px;top:747.92px;letter-spacing:0.507px;">Male</span>
<span class="t c" style="left:426.70px;top:747.92px;letter-spacing:-0.17px;">Spain</span>
<span class="t c" style="left:632.10px;top:747.92px;letter-spacing:-0.553px;">Europa FC</span>
<span class="t r" style="left:2.07px;top:768.27px;">216</span>
<span class="t c" style="left:64.46px;top:767.92px;letter-spacing:-0.537px;">1417</span>
<span class="t c" style="left:97.70px;top:767.92px;letter-spacing:-0.118px;">John</span>
<span class="t c" style="left:218.70px;top:767.92px;letter-spacing:-0.368px;">Sene</span>
<span class="t c" style="left:373.20px;top:767.92px;letter-spacing:0.507px;">Male</span>
<span class="t c" style="left:426.70px;top:767.92px;letter-spacing:0.122px;">Germany</span>
<span class="t c" style="left:632.10px;top:767.92px;letter-spacing:0.002px;">Mons Calpe Sports Club</span>
<span class="t r" style="left:2.07px;top:788.27px;">217</span>
<span class="t c" style="left:64.46px;top:787.92px;letter-spacing:-0.537px;">1418</span>
<span class="t c" style="left:97.70px;top:787.92px;letter-spacing:-0.118px;">John</span>
<span class="t c" style="left:218.70px;top:787.92px;letter-spacing:0.08px;">Breed</span>
<span class="t c" style="left:373.20px;top:787.92px;letter-spacing:0.507px;">Male</span>
<span class="t c" style="left:426.70px;top:787.92px;letter-spacing:0.122px;">Germany</span>
<span class="t c" style="left:632.10px;top:787.92px;letter-spacing:-0.553px;">Europa FC</span>
<span class="t r" style="left:2.07px;top:808.27px;">218</span>
<span class="t c" style="left:64.46px;top:807.92px;letter-spacing:-0.537px;">1419</span>
<span class="t c" style="left:97.70px;top:807.92px;letter-spacing:-0.118px;">John</span>
<span class="t c" style="left:218.70px;top:807.92px;letter-spacing:-0.158px;">Asquez</span>
<span class="t c" style="left:373.20px;top:807.92px;letter-spacing:0.507px;">Male</span>
<span class="t c" style="left:426.70px;top:807.92px;letter-spacing:0.122px;">Germany</span>
<span class="t c" style="left:632.10px;top:807.92px;letter-spacing:0.053px;">Lincoln Red Imps Football Club</span>
<span class="t r" style="left:2.07px;top:828.27px;">219</span>
<span class="t c" style="left:64.46px;top:827.92px;letter-spacing:-0.537px;">1420</span>
<span class="t c" style="left:97.70px;top:827.92px;letter-spacing:-0.118px;">John</span>
<span class="t c" style="left:218.70px;top:827.92px;letter-spacing:-0.531px;">Reyes</span>
<span class="t c" style="left:373.20px;top:827.92px;letter-spacing:0.507px;">Male</span>
<span class="t c" style="left:426.70px;top:827.92px;letter-spacing:0.122px;">Germany</span>
<span class="t c" style="left:632.10px;top:827.92px;letter-spacing:-0.553px;">Europa FC</span>
<span class="t r" style="left:2.07px;top:848.27px;">220</span>
<span class="t c" style="left:64.46px;top:847.92px;letter-spacing:-0.537px;">1421</span>
<span class="t c" style="left:97.70px;top:847.92px;letter-spacing:-0.118px;">John</span>
<span class="t c" style="left:218.70px;top:847.92px;letter-spacing:0.217px;">Omoregie</span>
<span class="t c" style="left:373.20px;top:847.92px;letter-spacing:0.507px;">Male</span>
<span class="t c" style="left:426.70px;top:847.92px;letter-spacing:-0.17px;">Spain</span>
<span class="t c" style="left:632.10px;top:847.92px;letter-spacing:-0.553px;">Europa FC</span>
<span class="t r" style="left:2.07px;top:868.27px;">221</span>
<span class="t c" style="left:64.46px;top:867.92px;letter-spacing:-0.537px;">1422</span>
<span class="t c" style="left:97.70px;top:867.92px;letter-spacing:-0.118px;">John</span>
<span class="t c" style="left:218.70px;top:867.92px;letter-spacing:0.155px;">Wyan</span>
<span class="t c" style="left:373.20px;top:867.92px;letter-spacing:0.507px;">Male</span>
<span class="t c" style="left:426.70px;top:867.92px;letter-spacing:0.087px;">Angola</span>
<span class="t c" style="left:632.10px;top:867.92px;letter-spacing:-0.553px;">Europa FC</span>
<span class="t r" style="left:2.07px;top:888.27px;">222</span>
<span class="t c" style="left:64.46px;top:887.92px;letter-spacing:-0.537px;">1423</span>
<span class="t c" style="left:97.70px;top:887.92px;letter-spacing:0.122px;">Anna</span>
<span class="t c" style="left:218.70px;top:887.92px;letter-spacing:0.086px;">Ferrary</span>
<span class="t c" style="left:373.20px;top:887.92px;letter-spacing:-0.044px;">Female</span>
<span class="t c" style="left:426.70px;top:887.92px;letter-spacing:-1.255px;">USA</span>
<span class="t c" style="left:632.10px;top:887.92px;letter-spacing:-0.553px;">Europa FC</span>
<span class="t" style="left:2.07px;top:908.27px;font-size:12.5px;color:#333;">223</span>
</body></html>
